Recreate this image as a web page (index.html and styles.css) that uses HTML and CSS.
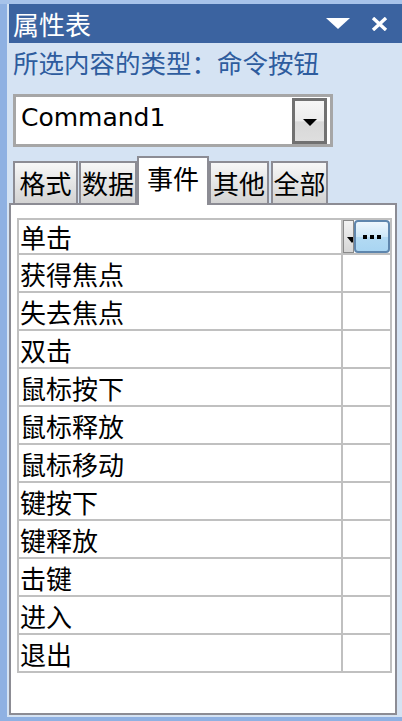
FILE: index.html
```html
<!DOCTYPE html>
<html lang="zh-CN">
<head>
  <meta charset="UTF-8">
  <meta name="viewport" content="width=device-width, initial-scale=1.0">
  <title>属性表</title>
  <link rel="stylesheet" href="styles.css">
</head>
<body>

  <div class="pane">

    <!-- Title bar -->
    <div class="titlebar">
      <span class="title">属性表</span>
      <div class="title-tools">
        <svg width="24" height="11" viewBox="0 0 24 11"><polygon points="0,0 24,0 12,11" fill="#fff"/></svg>
        <svg width="17" height="14" viewBox="0 0 17 14"><path d="M2 1 L15 13 M15 1 L2 13" stroke="#fff" stroke-width="3.4" fill="none"/></svg>
      </div>
    </div>

    <div class="selection-type">所选内容的类型：命令按钮</div>

    <!-- Object selector -->
    <div class="combo">
      <span class="combo-text">Command1</span>
      <div class="combo-btn"><span class="arrow"></span></div>
    </div>

    <!-- Tabs -->
    <div class="tabs">
      <div class="tab tab-format">格式</div>
      <div class="tab tab-data">数据</div>
      <div class="tab tab-events active">事件</div>
      <div class="tab tab-other">其他</div>
      <div class="tab tab-all">全部</div>
    </div>

    <!-- Property sheet -->
    <div class="sheet">
      <div class="grid">
        <div class="row">
          <div class="name">单击</div>
          <div class="value">
            <div class="dd"><span class="dd-arrow"></span></div>
            <div class="more"><i></i><i></i><i></i></div>
          </div>
        </div>
        <div class="row"><div class="name">获得焦点</div><div class="value"></div></div>
        <div class="row"><div class="name">失去焦点</div><div class="value"></div></div>
        <div class="row"><div class="name">双击</div><div class="value"></div></div>
        <div class="row"><div class="name">鼠标按下</div><div class="value"></div></div>
        <div class="row"><div class="name">鼠标释放</div><div class="value"></div></div>
        <div class="row"><div class="name">鼠标移动</div><div class="value"></div></div>
        <div class="row"><div class="name">键按下</div><div class="value"></div></div>
        <div class="row"><div class="name">键释放</div><div class="value"></div></div>
        <div class="row"><div class="name">击键</div><div class="value"></div></div>
        <div class="row"><div class="name">进入</div><div class="value"></div></div>
        <div class="row"><div class="name">退出</div><div class="value"></div></div>
      </div>
    </div>

  </div>

</body>
</html>
```

FILE: styles.css
```css
/* General */
* {
  margin: 0;
  padding: 0;
  box-sizing: border-box;
}

body {
  font-family: "Noto Sans CJK SC", sans-serif;
  font-size: 26px;
  color: #000;
  background-color: #8fb1e2;
  border-top: 4px solid #a7c3ea;
  height: 721px;
  overflow: hidden;
}

.pane {
  margin-left: 7px;
  padding: 0 0 2px 2px;
  background-color: #d5e3f3;
}

/* Title bar */
.titlebar {
  display: flex;
  align-items: center;
  height: 39px;
  padding: 0 14px 0 4px;
  background-color: #3b63a0;
  color: #fff;
}

.title {
  line-height: 39px;
}

.title-tools {
  display: flex;
  align-items: center;
  gap: 21px;
  margin-left: auto;
}

.title-tools svg {
  display: block;
}

.selection-type {
  padding-left: 4px;
  font-size: 25.5px;
  line-height: 38px;
  margin-bottom: 13px;
  color: #2e5c9e;
}

/* Combo box */
.combo {
  display: flex;
  align-items: center;
  width: 320px;
  height: 53px;
  margin-left: 4px;
  border: 3px solid #a6a6a6;
  background-color: #fff;
}

.combo-text {
  flex: 1;
  padding: 0 0 6px 5px;
  font-family: "DejaVu Sans", sans-serif;
  font-size: 25px;
}

.combo-btn {
  display: flex;
  justify-content: center;
  align-items: center;
  width: 35px;
  height: 46px;
  margin-right: 3px;
  border: 3px solid #717171;
  background: linear-gradient(#f6f6f6, #ececec 50%, #d8d8d8 52%, #dedede);
}

.combo-btn .arrow {
  margin-top: 4px;
  border-left: 7px solid transparent;
  border-right: 7px solid transparent;
  border-top: 7px solid #000;
}

/* Tabs */
.tabs {
  display: flex;
  align-items: flex-end;
  height: 49px;
  margin: 9px 0 -2px 4px;
  position: relative;
  z-index: 1;
}

.tab {
  display: flex;
  justify-content: center;
  align-items: center;
  height: 42px;
  margin-bottom: 2px;
  padding-bottom: 2px;
  border: 2px solid #8c8c94;
  border-bottom: none;
  background: linear-gradient(#f7f7f7, #d3d3d3);
  white-space: nowrap;
  overflow: hidden;
}

.tab-format { width: 65px; margin-right: 1px; }
.tab-data { width: 58px; }
.tab-events { width: 72px; }
.tab-other { width: 60px; margin-right: 2px; }
.tab-all { width: 57px; }

.tab.active {
  height: 49px;
  margin-bottom: 0;
  padding-bottom: 8px;
  background: #fff;
}

/* Property sheet */
.sheet {
  width: 388px;
  height: 512px;
  padding: 13px 3px 0 6px;
  border: 2px solid #8c8c94;
  background-color: #fff;
}

.grid {
  border: 2px solid #c0c0c0;
}

.row {
  display: flex;
  height: 38px;
  border-top: 2px solid #c0c0c0;
}

.row:first-child {
  height: 33px;
  border-top: none;
}

.name {
  flex: 1;
  display: flex;
  align-items: center;
  padding-left: 1px;
  border-right: 2px solid #c0c0c0;
}

.value {
  display: flex;
  width: 47px;
}

.dd {
  display: flex;
  justify-content: flex-end;
  align-items: center;
  width: 11px;
  border: 1px solid #8a8a8a;
  background: linear-gradient(#f2f2f2, #d6d6d6);
  overflow: hidden;
}

.dd-arrow {
  margin-right: -4px;
  margin-top: 6px;
  border-left: 5px solid transparent;
  border-right: 5px solid transparent;
  border-top: 6px solid #000;
}

.more {
  display: flex;
  justify-content: center;
  align-items: center;
  gap: 3px;
  width: 36px;
  border: 2px solid #5f86ad;
  border-radius: 4px;
  background: linear-gradient(#eef7fd, #cde7f8 50%, #b3daf3 52%, #a9d5f2);
}

.more i {
  width: 4px;
  height: 4px;
  background-color: #000;
}
```
